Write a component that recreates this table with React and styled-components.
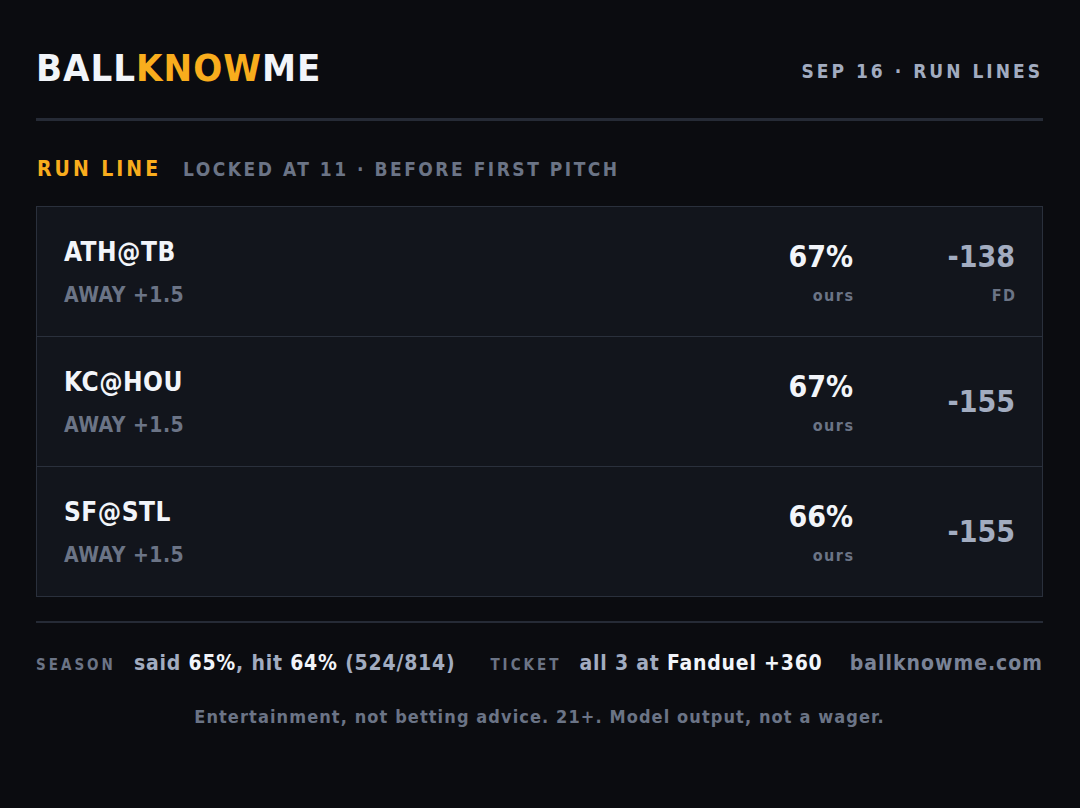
import React from 'react';
import styled, { createGlobalStyle } from 'styled-components';

const GlobalStyle = createGlobalStyle`
  html, body {
    margin: 0;
    background: #0b0c10;
  }
  body {
    font-family: "DejaVu Sans Condensed", "DejaVu Sans", sans-serif;
    font-weight: 700;
  }
`;

const Page = styled.div`
  width: 1080px;
  height: 808px;
  box-sizing: border-box;
  padding: 46px 37px 0 36px;
  background: #0b0c10;
  color: #f2f5fa;
`;

const Header = styled.header`
  display: flex;
  align-items: center;
  justify-content: space-between;
  padding-bottom: 28px;
  border-bottom: 3px solid #262b36;
`;

const Logo = styled.div`
  font-size: 38px;
  letter-spacing: 1px;
  color: #f2f5fa;
`;

const Accent = styled.span`
  color: #f9ad1d;
`;

const Dateline = styled.div`
  font-size: 19px;
  letter-spacing: 3px;
  color: #a2acc0;
  padding-top: 6px;
`;

const SectionTitle = styled.div`
  display: flex;
  align-items: baseline;
  gap: 22px;
  margin: 36px 0 25px 1px;
`;

const Kicker = styled.span`
  font-size: 21px;
  letter-spacing: 3px;
  color: #f9ad1d;
`;

const Subtle = styled.span`
  font-size: 19px;
  letter-spacing: 2.5px;
  color: #6b7486;
`;

const Board = styled.div`
  border: 1px solid #2a303c;
  background: #12151c;
`;

const Row = styled.div`
  display: grid;
  grid-template-columns: 1fr 130px 162px;
  align-items: center;
  height: 129px;
  padding: 0 27px;
  border-top: ${(p) => (p.$first ? 'none' : '1px solid #2a303c')};
`;

const Matchup = styled.div`
  display: flex;
  flex-direction: column;
  gap: 16px;
`;

const Team = styled.div`
  font-size: 26px;
  letter-spacing: 0.5px;
  color: #f2f5fa;
`;

const Side = styled.div`
  font-size: 21px;
  letter-spacing: 0.5px;
  color: #6b7486;
`;

const Stat = styled.div`
  display: flex;
  flex-direction: column;
  align-items: flex-end;
  gap: 12px;
`;

const Big = styled.div`
  font-size: 30px;
  color: ${(p) => (p.$muted ? '#a2acc0' : '#f2f5fa')};
`;

const Tag = styled.div`
  font-size: 16px;
  letter-spacing: 1.5px;
  margin-right: -1.5px;
  color: #6b7486;
`;

const Footer = styled.footer`
  margin-top: 24px;
  border-top: 2px solid #262b36;
  padding-top: 28px;
`;

const Summary = styled.div`
  display: flex;
  align-items: baseline;
  justify-content: space-between;
`;

const Group = styled.div`
  display: flex;
  align-items: baseline;
  gap: 18px;
`;

const Label = styled.span`
  font-size: 15px;
  letter-spacing: 3px;
  color: #6b7486;
  margin-left: ${(p) => (p.$spaced ? '17px' : '0')};
`;

const Value = styled.span`
  font-size: 21px;
  letter-spacing: 0.8px;
  color: #a2acc0;
`;

const Strong = styled.span`
  color: #f2f5fa;
`;

const Site = styled.span`
  font-size: 21px;
  letter-spacing: 1px;
  color: #7a8397;
`;

const Disclaimer = styled.p`
  margin: 31px 0 0;
  text-align: center;
  font-size: 18px;
  letter-spacing: 1.1px;
  color: #6b7486;
`;

const picks = [
  { game: 'ATH@TB', side: 'AWAY +1.5', prob: '67%', odds: '-138', book: 'FD' },
  { game: 'KC@HOU', side: 'AWAY +1.5', prob: '67%', odds: '-155' },
  { game: 'SF@STL', side: 'AWAY +1.5', prob: '66%', odds: '-155' },
];

export default function App() {
  return (
    <>
      <GlobalStyle />
      <Page>
        <Header>
          <Logo>
            BALL<Accent>KNOW</Accent>ME
          </Logo>
          <Dateline>SEP 16 · RUN LINES</Dateline>
        </Header>

        <SectionTitle>
          <Kicker>RUN LINE</Kicker>
          <Subtle>LOCKED AT 11 · BEFORE FIRST PITCH</Subtle>
        </SectionTitle>

        <Board>
          {picks.map((p, i) => (
            <Row key={p.game} $first={i === 0}>
              <Matchup>
                <Team>{p.game}</Team>
                <Side>{p.side}</Side>
              </Matchup>
              <Stat>
                <Big>{p.prob}</Big>
                <Tag>ours</Tag>
              </Stat>
              <Stat>
                <Big $muted>{p.odds}</Big>
                {p.book && <Tag>{p.book}</Tag>}
              </Stat>
            </Row>
          ))}
        </Board>

        <Footer>
          <Summary>
            <Group>
              <Label>SEASON</Label>
              <Value>
                said <Strong>65%</Strong>, hit <Strong>64%</Strong> (524/814)
              </Value>
              <Label $spaced>TICKET</Label>
              <Value>
                all 3 at <Strong>Fanduel +360</Strong>
              </Value>
            </Group>
            <Site>ballknowme.com</Site>
          </Summary>
          <Disclaimer>
            Entertainment, not betting advice. 21+. Model output, not a wager.
          </Disclaimer>
        </Footer>
      </Page>
    </>
  );
}
